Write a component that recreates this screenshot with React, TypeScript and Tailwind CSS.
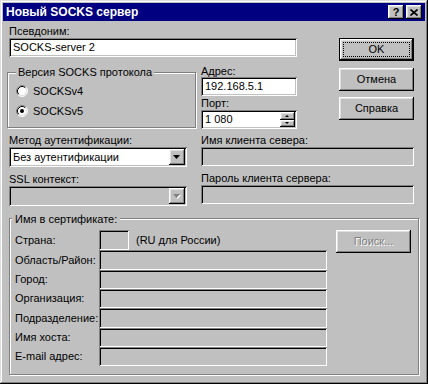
import { ReactNode } from "react";

const SUNKEN =
  "shadow-[inset_1px_1px_0_#808080,inset_-1px_-1px_0_#fff,inset_2px_2px_0_#000,inset_-2px_-2px_0_#c0c0c0]";
const RAISED =
  "shadow-[inset_-1px_-1px_0_#000,inset_1px_1px_0_#fff,inset_-2px_-2px_0_#808080,inset_2px_2px_0_#dfdfdf]";
const ETCHED = "border border-[#808080] shadow-[inset_1px_1px_0_#fff,1px_1px_0_#fff]";

interface FieldProps {
  value?: string;
  disabled?: boolean;
  className?: string;
  children?: ReactNode;
}

const Field = ({ value, disabled, className = "", children }: FieldProps) => (
  <div
    className={`flex items-center p-[2px] ${SUNKEN} ${disabled ? "bg-[#c0c0c0]" : "bg-white"} ${className}`}
  >
    <span className="flex-1 pl-[2px] whitespace-nowrap overflow-hidden">{value}</span>
    {children}
  </div>
);

const Arrow = ({ down = true, disabled = false, w = 7, h = 4 }) => {
  const pts = down ? `0,0 ${w},0 ${w / 2},${h}` : `0,${h} ${w},${h} ${w / 2},0`;
  return (
    <svg width={w + 1} height={h + 1} viewBox={`0 0 ${w + 1} ${h + 1}`}>
      {disabled && <polygon points={pts} fill="#fff" transform="translate(1 1)" />}
      <polygon points={pts} fill={disabled ? "#808080" : "#000"} />
    </svg>
  );
};

const Combo = ({ value, disabled }: { value?: string; disabled?: boolean }) => (
  <Field value={value} disabled={disabled} className="h-[20px]">
    <div className={`w-[16px] h-[16px] bg-[#c0c0c0] flex items-center justify-center ${RAISED}`}>
      <Arrow disabled={disabled} />
    </div>
  </Field>
);

const Button = ({ label, isDefault, disabled }: { label: string; isDefault?: boolean; disabled?: boolean }) => (
  <div
    className={`w-[75px] h-[23px] bg-[#c0c0c0] flex items-center justify-center ${
      isDefault ? "border border-black" : ""
    }`}
  >
    <div className={`w-full h-full flex items-center justify-center ${RAISED} ${isDefault ? "p-[3px]" : ""}`}>
      {isDefault ? (
        <div className="w-full h-full border border-dotted border-black flex items-center justify-center">
          {label}
        </div>
      ) : (
        <span className={disabled ? "text-[#808080] [text-shadow:1px_1px_0_#fff]" : ""}>{label}</span>
      )}
    </div>
  </div>
);

const Group = ({ legend, className, legendClass, children }: { legend: string; className: string; legendClass: string; children?: ReactNode }) => (
  <div className={`relative ${ETCHED} ${className}`}>
    <span className={`absolute bg-[#c0c0c0] whitespace-nowrap leading-[13px] ${legendClass}`}>{legend}</span>
    {children}
  </div>
);

const Radio = ({ label, checked }: { label: string; checked?: boolean }) => (
  <div className="flex items-center h-[20px]">
    <svg width="12" height="12" viewBox="0 0 12 12">
      <circle cx="6" cy="6" r="5" fill="#fff" />
      <path d="M2.11 9.89A5.5 5.5 0 0 1 9.89 2.11" fill="none" stroke="#808080" />
      <path d="M9.89 2.11A5.5 5.5 0 0 1 2.11 9.89" fill="none" stroke="#fff" />
      <path d="M2.82 9.18A4.5 4.5 0 0 1 9.18 2.82" fill="none" stroke="#000" />
      <path d="M9.18 2.82A4.5 4.5 0 0 1 2.82 9.18" fill="none" stroke="#dfdfdf" />
      {checked && <circle cx="6" cy="6" r="2" fill="#000" />}
    </svg>
    <span className="ml-[5px]">{label}</span>
  </div>
);

const certRows: { label: string; h: string }[] = [
  { label: "Страна:", h: "h-[20px]" },
  { label: "Область/Район:", h: "h-[20px]" },
  { label: "Город:", h: "h-[19px]" },
  { label: "Организация:", h: "h-[19px]" },
  { label: "Подразделение:", h: "h-[20px]" },
  { label: "Имя хоста:", h: "h-[19px]" },
  { label: "E-mail адрес:", h: "h-[19px]" },
];

export default function App() {
  return (
    <div
      className={`w-[428px] h-[384px] bg-[#c0c0c0] p-[3px] flex flex-col font-['Liberation_Sans',Arial,sans-serif] text-[11px] leading-[13px] text-black shadow-[inset_-1px_-1px_0_#000,inset_1px_1px_0_#dfdfdf,inset_-2px_-2px_0_#808080,inset_2px_2px_0_#fff]`}
    >
      {/* title bar */}
      <div className="h-[18px] bg-[#000080] flex items-center justify-between pl-[3px] pr-[3px]">
        <span className="text-white font-bold text-[12px]">Новый SOCKS сервер</span>
        <div className="flex gap-[2px]">
          <div className={`w-[16px] h-[14px] bg-[#c0c0c0] flex items-center justify-center font-bold text-[11px] ${RAISED}`}>
            ?
          </div>
          <div className={`w-[16px] h-[14px] bg-[#c0c0c0] flex items-center justify-center ${RAISED}`}>
            <svg width="8" height="7" viewBox="0 0 8 7">
              <path d="M0.5 0.5L7.5 6.5M7.5 0.5L0.5 6.5" stroke="#000" strokeWidth="1.6" />
            </svg>
          </div>
        </div>
      </div>

      <div className="flex flex-col pl-[6px] pr-[11px]">
        {/* top block */}
        <div className="flex items-start">
          <div className="w-[288px] flex flex-col">
            <div className="mt-[4px] h-[13px]">Псевдоним:</div>
            <Field value="SOCKS-server 2" className="h-[19px]" />
            <div className="flex items-start">
              <Group
                legend="Версия SOCKS протокола"
                className="-ml-[2px] mt-[15px] w-[189px] h-[56px] pt-[8px] pl-[8px]"
                legendClass="-top-[7px] left-[8px] px-[2px]"
              >
                <Radio label="SOCKSv4" />
                <Radio label="SOCKSv5" checked />
              </Group>
              <div className="ml-[5px] mt-[8px] w-[96px] flex flex-col">
                <div className="h-[12px]">Адрес:</div>
                <Field value="192.168.5.1" className="h-[19px]" />
                <div className="mt-[1px] h-[13px]">Порт:</div>
                <Field value="1 080" className="h-[19px]">
                  <div className="flex flex-col w-[15px] h-[15px]">
                    <div className={`h-[8px] bg-[#c0c0c0] flex items-center justify-center ${RAISED}`}>
                      <Arrow down={false} w={4} h={2} />
                    </div>
                    <div className={`h-[7px] bg-[#c0c0c0] flex items-center justify-center ${RAISED}`}>
                      <Arrow w={4} h={2} />
                    </div>
                  </div>
                </Field>
              </div>
            </div>
          </div>
          <div className="ml-[42px] pt-[17px] flex flex-col">
            <Button label="OK" isDefault />
            <div className="mt-[7px]">
              <Button label="Отмена" />
            </div>
            <div className="mt-[6px]">
              <Button label="Справка" />
            </div>
          </div>
        </div>

        {/* auth block */}
        <div className="flex items-start">
          <div className="w-[178px] flex flex-col">
            <div className="mt-[5px] h-[13px]">Метод аутентификации:</div>
            <Combo value="Без аутентификации" />
            <div className="mt-[6px] h-[13px]">SSL контекст:</div>
            <Combo disabled />
          </div>
          <div className="ml-[14px] w-[213px] flex flex-col">
            <div className="mt-[5px] h-[13px]">Имя клиента севера:</div>
            <Field disabled className="h-[19px]" />
            <div className="mt-[6px] h-[13px]">Пароль клиента сервера:</div>
            <Field disabled className="h-[19px]" />
          </div>
        </div>

        {/* certificate block */}
        <Group
          legend="Имя в сертификате:"
          className="mt-[12px] w-[410px] h-[157px] pt-[11px] pl-[5px] flex items-start"
          legendClass="-top-[6px] left-[2px] px-[3px]"
        >
          <div className="flex flex-col">
            {certRows.map((row, i) => (
              <div key={row.label} className={`flex items-center ${row.h}`}>
                <span className="w-[84px] whitespace-nowrap">{row.label}</span>
                {i === 0 ? (
                  <>
                    <Field disabled className="w-[30px] h-full" />
                    <span className="ml-[7px]">(RU для России)</span>
                  </>
                ) : (
                  <Field disabled className="w-[228px] h-full" />
                )}
              </div>
            ))}
          </div>
          <div className="ml-[9px]">
            <Button label="Поиск..." disabled />
          </div>
        </Group>
      </div>
    </div>
  );
}
